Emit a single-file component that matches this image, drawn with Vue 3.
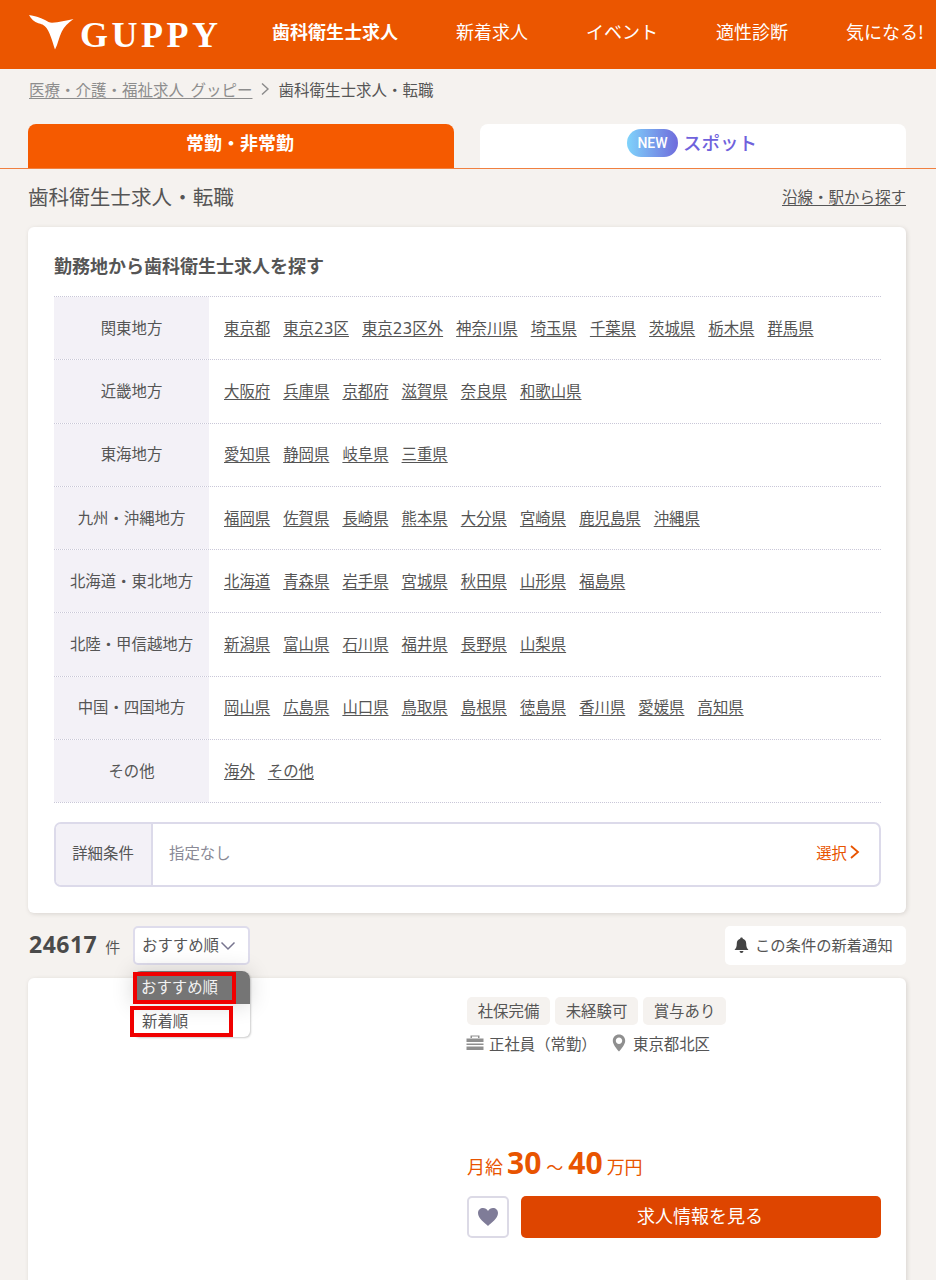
<script setup>
const regions = [
  { name: '関東地方', items: ['東京都', '東京23区', '東京23区外', '神奈川県', '埼玉県', '千葉県', '茨城県', '栃木県', '群馬県'] },
  { name: '近畿地方', items: ['大阪府', '兵庫県', '京都府', '滋賀県', '奈良県', '和歌山県'] },
  { name: '東海地方', items: ['愛知県', '静岡県', '岐阜県', '三重県'] },
  { name: '九州・沖縄地方', items: ['福岡県', '佐賀県', '長崎県', '熊本県', '大分県', '宮崎県', '鹿児島県', '沖縄県'] },
  { name: '北海道・東北地方', items: ['北海道', '青森県', '岩手県', '宮城県', '秋田県', '山形県', '福島県'] },
  { name: '北陸・甲信越地方', items: ['新潟県', '富山県', '石川県', '福井県', '長野県', '山梨県'] },
  { name: '中国・四国地方', items: ['岡山県', '広島県', '山口県', '鳥取県', '島根県', '徳島県', '香川県', '愛媛県', '高知県'] },
  { name: 'その他', items: ['海外', 'その他'] },
]
const nav = ['歯科衛生士求人', '新着求人', 'イベント', '適性診断', '気になる!']
const tags = ['社保完備', '未経験可', '賞与あり']
</script>

<template>
  <div class="page">
    <header class="header">
      <div class="logo">
        <svg class="fish" width="48" height="38" viewBox="0 0 48 38">
          <path d="M1 2C6 2.500 12 4.500 17 7C19.500 8.500 21.500 9.800 24 9.800C31 9.500 38 7.500 45.500 6C40 10 36 14 33.700 18.700C31 24 30 31 27 36.500C25 31 23 22 18.700 15.300C16 11.500 13 11 10.300 10.300C6.500 9 3 6 1 2Z" fill="#fff"/>
        </svg>
        <span class="wordmark">GUPPY</span>
      </div>
      <nav class="nav">
        <span v-for="(n, i) in nav" :key="n" :class="{ current: i === 0 }">{{ n }}</span>
      </nav>
    </header>

    <div class="crumbs">
      <a>医療・介護・福祉求人 グッピー</a>
      <svg width="10" height="14" viewBox="0 0 10 14"><path d="M2 1.500L8 7L2 12.500" fill="none" stroke="#8a8a8a" stroke-width="1.400"/></svg>
      <span>歯科衛生士求人・転職</span>
    </div>

    <div class="tabs">
      <div class="tab active">常勤・非常勤</div>
      <div class="tab spot"><span class="new">NEW</span><span class="spot-text">スポット</span></div>
    </div>

    <main class="main">
      <div class="title-row">
        <h1>歯科衛生士求人・転職</h1>
        <a>沿線・駅から探す</a>
      </div>

      <section class="card search">
        <h2>勤務地から歯科衛生士求人を探す</h2>
        <div class="table">
          <div v-for="r in regions" :key="r.name" class="row">
            <div class="label">{{ r.name }}</div>
            <div class="links"><a v-for="p in r.items" :key="p">{{ p }}</a></div>
          </div>
        </div>
        <div class="detail">
          <div class="detail-label">詳細条件</div>
          <div class="detail-value">指定なし</div>
          <div class="choose">選択<svg width="11" height="16" viewBox="0 0 11 16"><path d="M2 2L9 8L2 14" fill="none" stroke="#e85400" stroke-width="1.800"/></svg></div>
        </div>
      </section>

      <div class="count-row">
        <div class="count"><strong>24617</strong><span>件</span></div>
        <div class="select-wrap">
          <div class="select">おすすめ順<svg width="16" height="10" viewBox="0 0 16 10"><path d="M1.500 1.500L8 8L14.500 1.500" fill="none" stroke="#77758f" stroke-width="1.500"/></svg></div>
          <div class="menu">
            <div class="opt selected"><span class="mark first">おすすめ順</span></div>
            <div class="opt"><span class="mark second">新着順</span></div>
          </div>
        </div>
        <div class="notify">
          <svg width="15" height="17" viewBox="0 0 15 17"><path d="M7.500 0.500C8.300 0.500 8.800 1 8.800 1.800C11 2.400 12.200 4.200 12.200 6.600C12.200 10 13 11.600 14.500 13H0.500C2 11.600 2.800 10 2.800 6.600C2.800 4.200 4 2.400 6.200 1.800C6.200 1 6.700 0.500 7.500 0.500ZM5.600 14H9.400C9.400 15.200 8.600 16 7.500 16C6.400 16 5.600 15.200 5.600 14Z" fill="#444"/></svg>
          この条件の新着通知
        </div>
      </div>

      <section class="card job">
        <div class="job-body">
          <div class="tags"><span v-for="t in tags" :key="t">{{ t }}</span></div>
          <div class="meta">
            <svg width="18" height="16" viewBox="0 0 18 16"><path d="M6 3V1.500H12V3H13.500V0.500H4.500V3ZM0.500 3.500H17.500V7H0.500ZM0.500 8.500H17.500V10H0.500ZM0.500 11.500H17.500V15H0.500Z" fill="#8f8f8f"/></svg>
            <span class="employ">正社員（常勤）</span>
            <svg width="14" height="18" viewBox="0 0 14 18"><path fill-rule="evenodd" d="M7 0.500C3.500 0.500 0.800 3.200 0.800 6.700C0.800 10.500 4.500 14.500 7 17.500C9.500 14.500 13.200 10.500 13.200 6.700C13.200 3.200 10.500 0.500 7 0.500ZM7 3.500C8.800 3.500 10.200 4.900 10.200 6.700C10.200 8.500 8.800 9.900 7 9.900C5.200 9.900 3.800 8.500 3.800 6.700C3.800 4.900 5.200 3.500 7 3.500Z" fill="#8f8f8f"/></svg>
            <span class="place">東京都北区</span>
          </div>
          <div class="salary">月給<b>30</b><i>～</i><b>40</b><em>万円</em></div>
          <div class="actions">
            <button class="fav">
              <svg width="22" height="20" viewBox="0 0 22 20"><path d="M11 19C8 16 1 11.500 1 6C1 3 3.300 1 6 1C8 1 10 2 11 4C12 2 14 1 16 1C18.700 1 21 3 21 6C21 11.500 14 16 11 19Z" fill="#7f7c98"/></svg>
            </button>
            <button class="cta">求人情報を見る</button>
          </div>
        </div>
      </section>
    </main>
  </div>
</template>

<style>
html, body { margin: 0; background: #f5f2ef; }
</style>

<style scoped>
.page {
  width: 936px;
  height: 1280px;
  overflow: hidden;
  background: #f5f2ef;
  color: #555;
  font-family: "Noto Sans CJK JP", "Noto Sans", sans-serif;
  font-size: 15.4px;
}
a { color: inherit; }

.header {
  height: 69px;
  background: #eb5600;
  display: flex;
  align-items: center;
  padding-left: 28px;
  color: #fff;
  box-sizing: border-box;
}
.logo { display: flex; align-items: center; width: 244px; flex: none; }
.fish { margin-top: -5px; flex: none; }
.wordmark {
  margin-left: 4px;
  font-family: "Liberation Serif", serif;
  font-weight: 700;
  font-size: 36px;
  line-height: 1;
  letter-spacing: 3.500px;
}
.nav { display: flex; gap: 58px; font-size: 18px; white-space: nowrap; margin-top: -7px; }
.nav .current { font-weight: 700; }

.crumbs {
  height: 42px;
  padding: 0 0 2px 29px;
  box-sizing: border-box;
  display: flex;
  align-items: center;
  font-size: 15.5px;
  color: #555;
  gap: 8px;
}
.crumbs a { color: #8d8d8d; text-decoration: underline; text-underline-offset: 2px; word-spacing: 3px; }

.tabs {
  margin-top: 13px;
  padding: 0 30px 0 28px;
  display: flex;
  justify-content: space-between;
  border-bottom: 1px solid #f08040;
  height: 44px;
}
.tab {
  width: 426px;
  height: 44px;
  border-radius: 8px 8px 0 0;
  display: flex;
  align-items: center;
  justify-content: center;
  font-size: 18px;
  font-weight: 700;
  padding-bottom: 8px;
  box-sizing: border-box;
}
.tab.active { background: #f55a00; color: #fff; padding-right: 2px; }
.tab.spot { background: #fff; gap: 5px; padding: 0 2px 6px 0; }
.new {
  width: 51px;
  height: 28px;
  border-radius: 14px;
  background: linear-gradient(90deg, #7fd3fb, #6f6bdc);
  color: #fff;
  font-family: "Roboto", sans-serif;
  font-size: 14px;
  font-weight: 500;
  display: flex;
  align-items: center;
  justify-content: center;
}
.spot-text {
  font-size: 18.500px;
  font-weight: 500;
  color: #6f62dc;
  margin-top: -3px;
}

.main { padding: 0 30px 0 28px; }
.title-row {
  height: 58px;
  display: flex;
  justify-content: space-between;
  align-items: center;
  padding-bottom: 5px;
  box-sizing: border-box;
}
.title-row h1 { margin: 0; font-size: 20.6px; font-weight: 400; color: #555; }
.title-row a { text-decoration: underline; text-underline-offset: 2px; font-size: 15.5px; }

.card {
  background: #fff;
  border-radius: 6px;
  box-shadow: 1px 1px 4px rgba(120, 110, 100, 0.22);
}
.search {
  height: 686px;
  padding: 0 25px 0 26px;
  box-sizing: border-box;
}
.search h2 {
  margin: 0;
  height: 69px;
  display: flex;
  align-items: center;
  padding-top: 7px;
  box-sizing: border-box;
  font-size: 18px;
  font-weight: 700;
  color: #555;
}
.table { border-top: 1px dotted #c9c7d8; }
.row {
  height: 63.300px;
  box-sizing: border-box;
  display: flex;
  border-bottom: 1px dotted #c9c7d8;
}
.label {
  width: 155px;
  flex: none;
  background: #f3f1f7;
  display: flex;
  align-items: center;
  justify-content: center;
  padding-bottom: 3px;
  box-sizing: border-box;
}
.links {
  display: flex;
  align-items: center;
  gap: 13px;
  padding: 0 0 3px 15px;
  white-space: nowrap;
  font-family: "DejaVu Sans", "Noto Sans CJK JP", sans-serif;
}
.links a { text-decoration: underline; text-underline-offset: 2px; }

.detail {
  margin-top: 19px;
  height: 65px;
  border: 2px solid #dcdaea;
  border-radius: 7px;
  box-sizing: border-box;
  display: flex;
  align-items: center;
  overflow: hidden;
}
.detail-label {
  width: 97px;
  height: 100%;
  background: #f3f1f7;
  border-right: 2px solid #dcdaea;
  box-sizing: border-box;
  display: flex;
  align-items: center;
  justify-content: center;
  flex: none;
  padding: 0 1px 5px 0;
}
.detail-value { margin: 0 0 5px 16px; color: #8a8a96; flex: 1; }
.choose {
  color: #e85400;
  display: flex;
  align-items: center;
  gap: 2px;
  padding: 0 19px 5px 0;
}

.count-row {
  display: flex;
  align-items: center;
  height: 39px;
  margin-top: 13px;
  position: relative;
}
.count { width: 105px; display: flex; align-items: baseline; box-sizing: border-box; margin-top: -4px; flex: none; padding-left: 1px; }
.count strong { font-size: 23px; font-weight: 700; letter-spacing: 0.500px; color: #4a4a4a; font-family: "Open Sans", sans-serif; }
.count span { margin-left: 8px; font-size: 15px; }
.select-wrap { position: relative; }
.select {
  width: 117px;
  height: 39px;
  box-sizing: border-box;
  background: #fff;
  border: 2px solid #dedcec;
  border-radius: 5px;
  display: flex;
  align-items: center;
  padding: 0 0 4px 7px;
  gap: 1px;
  white-space: nowrap;
}
.select svg { margin-top: 4px; }
.menu {
  position: absolute;
  left: 0;
  top: 45px;
  width: 117px;
  height: 66px;
  background: #fff;
  border-radius: 8px 8px 6px 6px;
  box-shadow: 1px 1px 2px rgba(0, 0, 0, 0.2);
  z-index: 2;
}
.opt { height: 33px; position: relative; display: flex; align-items: center; padding-left: 8px; }
.opt.selected { background: #757575; color: #f2f2f2; border-radius: 8px 8px 0 0; box-shadow: 0 0 22px rgba(0, 0, 0, 0.16); }
.mark { position: absolute; display: flex; align-items: center; border: 4px solid #f00000; box-sizing: border-box; padding-bottom: 4px; }
.mark.first { left: 0; top: 1px; width: 103px; height: 32px; padding-left: 4px; }
.mark.second { left: -3px; top: 2px; width: 103px; height: 31px; padding-left: 8px; }
.notify {
  margin-left: auto;
  width: 181px;
  height: 39px;
  background: #fff;
  border-radius: 5px;
  display: flex;
  align-items: center;
  gap: 6px;
  padding: 0 0 4px 9px;
  box-sizing: border-box;
  white-space: nowrap;
  font-size: 15.3px;
}
.notify svg { margin-top: 4px; flex: none; }

.job {
  margin-top: 13px;
  height: 340px;
  padding: 19px 25px 0 439px;
  box-sizing: border-box;
}
.tags { display: flex; gap: 5px; }
.tags span {
  width: 83px;
  height: 28px;
  border-radius: 5px;
  background: #f5f2ef;
  display: flex;
  align-items: center;
  justify-content: center;
  padding-bottom: 2px;
  box-sizing: border-box;
}
.meta { display: flex; align-items: center; height: 24px; margin-top: 6px; }
.meta svg:first-child { margin-left: -1px; }
.employ { margin-left: 5px; width: 123px; white-space: nowrap; }
.place { margin-left: 7px; }
.salary {
  margin-top: 94px;
  height: 34px;
  display: flex;
  align-items: baseline;
  color: #e85400;
  font-size: 18px;
  transform: translateY(-3px);
}
.salary b { font-family: "Open Sans", sans-serif; font-size: 30px; font-weight: 700; line-height: 34px; margin-left: 4px; }
.salary i { font-style: normal; margin: 0 1px 0 5px; font-size: 17px; }
.salary em { font-style: normal; margin-left: 4px; }
.actions { display: flex; gap: 12px; margin-top: 13px; }
.fav {
  width: 42px;
  height: 42px;
  background: #fff;
  border: 2px solid #dcdae6;
  border-radius: 5px;
  padding: 0;
  display: flex;
  align-items: center;
  justify-content: center;
}
.cta {
  flex: 1;
  height: 42px;
  border: 0;
  border-radius: 5px;
  background: #de4500;
  color: #fff;
  font-family: inherit;
  font-size: 18px;
  padding: 0 2px 4px 0;
}
</style>
